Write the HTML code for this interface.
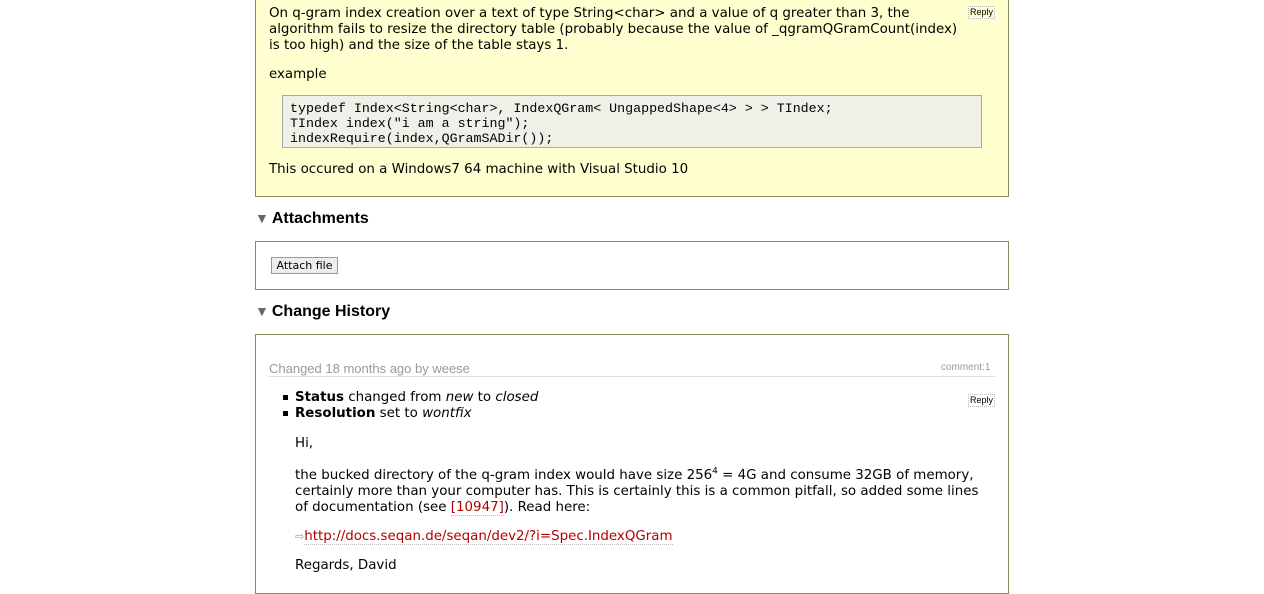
<!DOCTYPE html>
<html><head><style>
body{margin:0;width:1264px;height:569px;overflow:hidden;background:#fff;font-family:"DejaVu Sans","Liberation Sans",sans-serif;font-size:13.4px;color:#000;position:relative}
.a{position:absolute;white-space:nowrap;line-height:16px}
.box{position:absolute;border:1px solid #8f8a5e;box-sizing:border-box}
.reply{position:absolute;font-size:9px;font-family:"Liberation Sans",sans-serif;border:1px dotted #bbb;padding:0 1px;line-height:11px;color:#000}
pre{margin:0;font-family:"Liberation Mono",monospace;font-size:13.3px;line-height:15px}
h2{position:absolute;margin:0;font-family:"Liberation Sans",sans-serif;font-size:16px;font-weight:bold;line-height:20px}
.tri{color:#666;font-size:14px;margin-right:3px}
a{color:#b00000;text-decoration:none;border-bottom:1px dotted #bbb}
.b{display:inline-block;width:5px;height:5px;background:#000;vertical-align:middle;margin-right:7px}
</style></head><body>
<div class="box" style="left:255px;top:-2px;width:754px;height:199px;background:#ffffd0"></div>
<div class="reply" style="left:968px;top:6px">Reply</div>
<div class="a" style="left:269px;top:6px">On q-gram index creation over a text of type String&lt;char&gt; and a value of q greater than 3, the<br>algorithm fails to resize the directory table (probably because the value of _qgramQGramCount(index)<br>is too high) and the size of the table stays 1.</div>
<div class="a" style="left:269px;top:67px">example</div>
<div class="box" style="left:282px;top:95px;width:700px;height:53px;background:#f0f0e8;border-color:#aaa;padding:5px 0 0 7px"><pre>typedef Index&lt;String&lt;char&gt;, IndexQGram&lt; UngappedShape&lt;4&gt; &gt; &gt; TIndex;
TIndex index("i am a string");
indexRequire(index,QGramSADir());</pre></div>
<div class="a" style="left:269px;top:162px">This occured on a Windows7 64 machine with Visual Studio 10</div>

<h2 style="left:255px;top:208px"><span class="tri">▼</span>Attachments</h2>
<div class="box" style="left:255px;top:241px;width:754px;height:49px"></div>
<div style="position:absolute;left:271px;top:257px;width:65px;height:15px;border:1px solid #999;background:#eee;font-size:11px;font-family:'DejaVu Sans',sans-serif;line-height:15px;text-align:center">Attach file</div>

<h2 style="left:255px;top:301px"><span class="tri">▼</span>Change History</h2>
<div class="box" style="left:255px;top:334px;width:754px;height:260px"></div>
<div class="a" style="left:269px;top:361px;color:#999;font-family:'Liberation Sans',sans-serif;font-size:13px">Changed 18 months ago by weese</div>
<div class="a" style="left:941px;top:360px;color:#999;font-family:'Liberation Sans',sans-serif;font-size:10px">comment:1</div>
<div style="position:absolute;left:269px;top:376px;width:726px;border-top:1px solid #ddd"></div>
<div class="reply" style="left:968px;top:394px">Reply</div>
<div class="a" style="left:283px;top:390px"><span class="b"></span><b>Status</b> changed from <i>new</i> to <i>closed</i></div>
<div class="a" style="left:283px;top:406px"><span class="b"></span><b>Resolution</b> set to <i>wontfix</i></div>
<div class="a" style="left:295px;top:436px">Hi,</div>
<div class="a" style="left:295px;top:468px">the bucked directory of the q-gram index would have size 256<sup style="font-size:9px;line-height:0">4</sup> = 4G and consume 32GB of memory,<br>certainly more than your computer has. This is certainly this is a common pitfall, so added some lines<br>of documentation (see <a>[10947]</a>). Read here:</div>
<div class="a" style="left:295px;top:529px"><span style="color:#999;font-size:11px">⇨</span><a>http://docs.seqan.de/seqan/dev2/?i=Spec.IndexQGram</a></div>
<div class="a" style="left:295px;top:558px">Regards, David</div>
</body></html>
